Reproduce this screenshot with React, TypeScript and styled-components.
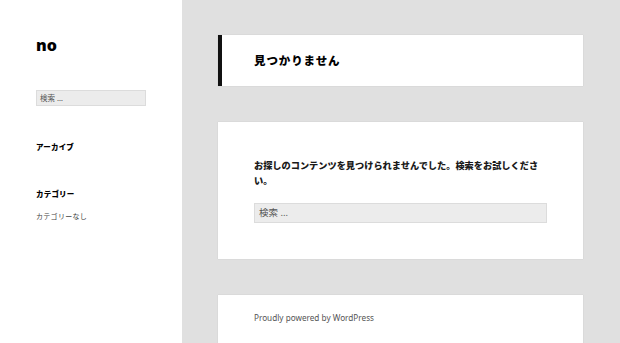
import React from 'react'
import styled, { createGlobalStyle } from 'styled-components'

const GlobalStyle = createGlobalStyle`
  html, body {
    margin: 0;
    padding: 0;
    background: #e0e0e0;
  }
  body {
    font-family: "Noto Sans", "Noto Sans CJK JP", sans-serif;
    color: #333;
  }
`

const Page = styled.div`
  display: flex;
  width: 620px;
  height: 343px;
  overflow: hidden;
  background: #e0e0e0;
`

const Sidebar = styled.aside`
  width: 182px;
  flex-shrink: 0;
  background: #fff;
  padding: 36px 0 0 36px;
  box-sizing: border-box;
`

const SiteTitle = styled.h1`
  margin: 0;
  font-size: 16px;
  line-height: 18px;
  font-weight: 900;
  color: #000;
`

const SideSearch = styled.div`
  margin-top: 36px;
  width: 110px;
  height: 16px;
  box-sizing: border-box;
  background: #ececec;
  border: 1px solid #dcdcdc;
  padding-left: 3px;
  font-size: 7.5px;
  line-height: 14px;
  color: #555;
`

const WidgetTitle = styled.h2<{ $gap: number }>`
  margin: ${(p) => p.$gap}px 0 0;
  font-size: 7.5px;
  line-height: 10px;
  font-weight: 900;
  color: #000;
  letter-spacing: 0.2px;
`

const WidgetText = styled.p`
  margin: 13px 0 0;
  font-size: 7px;
  line-height: 10px;
  color: #444;
  letter-spacing: 0.3px;
`

const Main = styled.main`
  flex: 1;
  display: flex;
  flex-direction: column;
  gap: 36px;
  padding: 35px 37px 0 36px;
`

const Card = styled.section<{ $accent?: boolean; $pad: string }>`
  background: #fff;
  box-shadow: 0 0 1px rgba(0, 0, 0, 0.15);
  padding: ${(p) => p.$pad};
  border-left: ${(p) => (p.$accent ? '4px solid #111' : 'none')};
  flex-shrink: 0;
`

const PageTitle = styled.h1`
  margin: 0;
  font-size: 11.5px;
  line-height: 15px;
  font-weight: 900;
  letter-spacing: 0.9px;
  color: #000;
`

const Message = styled.p`
  margin: 0;
  font-size: 9.2px;
  line-height: 15px;
  font-weight: 900;
  color: #1a1a1a;
`

const MainSearch = styled.div`
  margin-top: 15px;
  height: 20px;
  box-sizing: border-box;
  background: #ececec;
  border: 1px solid #dcdcdc;
  padding-left: 4px;
  font-size: 9.5px;
  line-height: 18px;
  color: #555;
`

const Credit = styled.p`
  margin: 0;
  font-size: 8.2px;
  line-height: 12px;
  color: #555;
`

export default function App() {
  return (
    <>
      <GlobalStyle />
      <Page>
        <Sidebar>
          <SiteTitle>no</SiteTitle>
          <SideSearch>検索 …</SideSearch>
          <WidgetTitle $gap={36}>アーカイブ</WidgetTitle>
          <WidgetTitle $gap={37}>カテゴリー</WidgetTitle>
          <WidgetText>カテゴリーなし</WidgetText>
        </Sidebar>
        <Main>
          <Card $accent $pad="18px 36px 18px 32px">
            <PageTitle>見つかりません</PageTitle>
          </Card>
          <Card $pad="36px 36px 36px 36px">
            <Message>
              お探しのコンテンツを見つけられませんでした。検索をお試しください。
            </Message>
            <MainSearch>検索 …</MainSearch>
          </Card>
          <Card $pad="17px 36px 30px 36px">
            <Credit>Proudly powered by WordPress</Credit>
          </Card>
        </Main>
      </Page>
    </>
  )
}
